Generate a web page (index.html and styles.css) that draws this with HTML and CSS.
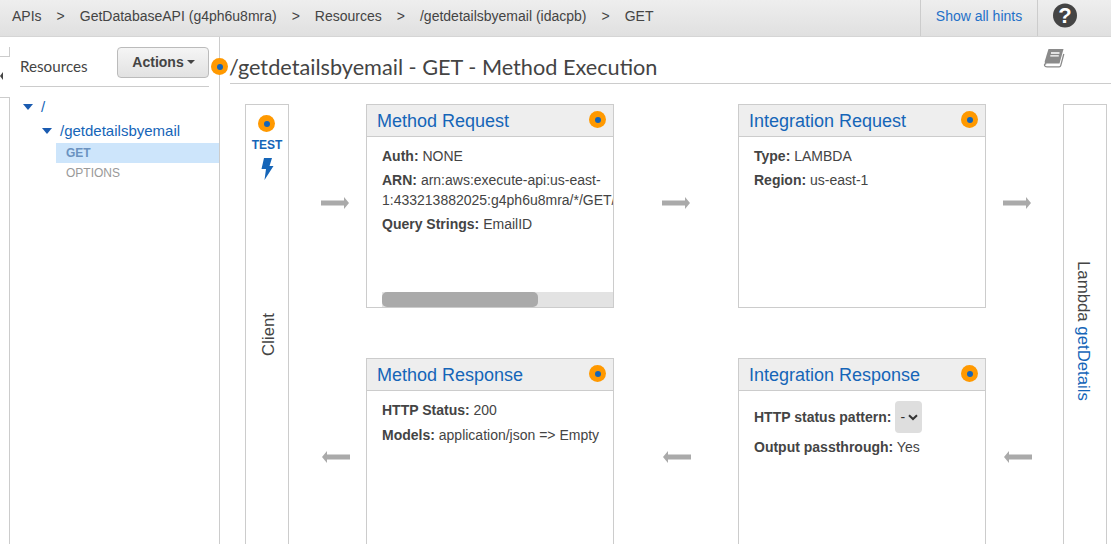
FILE: index.html
```html
<!DOCTYPE html>
<html lang="en">
<head>
<meta charset="utf-8">
<title>Method Execution</title>
<link rel="stylesheet" href="styles.css">
</head>
<body>
<header class="topbar">
  <nav class="crumbs">
    <span>APIs</span><span class="sep">&gt;</span>
    <span>GetDatabaseAPI (g4ph6u8mra)</span><span class="sep">&gt;</span>
    <span>Resources</span><span class="sep">&gt;</span>
    <span>/getdetailsbyemail (idacpb)</span><span class="sep">&gt;</span>
    <span>GET</span>
  </nav>
  <a class="hints">Show all hints</a>
  <div class="help"><svg width="26" height="26" viewBox="0 0 26 26"><circle cx="13" cy="12.5" r="12" fill="#444"/><text x="13" y="20" class="qmark" text-anchor="middle">?</text></svg></div>
</header>
<div class="layout">
  <aside class="rail">
    <div class="rail-tab"></div>
    <div class="rail-notch"></div>
    <div class="rail-box"></div>
  </aside>
  <section class="resources">
    <div class="res-head">
      <span class="res-title">Resources</span>
      <button class="actions">Actions<i class="caret"></i></button>
      <span class="dot dot-actions"><i></i></span>
    </div>
    <ul class="tree">
      <li class="tree-row r0"><i class="tri"></i><a>/</a></li>
      <li class="tree-row r1"><i class="tri"></i><a>/getdetailsbyemail</a></li>
      <li class="verb sel">GET</li>
      <li class="verb">OPTIONS</li>
    </ul>
  </section>
  <main class="content">
    <div class="title-row">
      <h1>/getdetailsbyemail - GET - Method Execution</h1>
      <svg class="book" width="22" height="20" viewBox="0 0 22 20"><path d="M5.5 1 H20.5 L16.5 15.5 H3.5 Q1.2 15.5 1.8 13 Z" fill="#8a8a8a"/><path d="M3.3 15.5 Q1 16 1.6 17.6 Q2 18.8 4 18.8 H16.2 Q17.4 18.8 17.8 17.4 L20.8 6" fill="none" stroke="#8a8a8a" stroke-width="1.3"/><path d="M8 5 H16.5 M7.3 7.8 H15.8" stroke="#fff" stroke-width="1.3"/></svg>
    </div>
    <div class="diagram">
      <div class="client">
        <span class="dot"><i></i></span>
        <a class="test">TEST</a>
        <svg class="bolt" width="13" height="22" viewBox="0 0 13 22"><path d="M3 0 H11 L8.5 8 H12.5 L3.5 22 L5 11 H0.5 Z" fill="#1565b8"/></svg>
        <span class="vtext client-label">Client</span>
      </div>
      <div class="flow-grid">
        <div class="arrow top a-left"><svg width="28" height="14" viewBox="0 0 28 14"><path d="M0 4.5 H23 V1 L28 7 L23 13 V9.5 H0 Z" fill="#aaa"/></svg></div>
        <article class="card">
          <header class="card-head"><a>Method Request</a><span class="dot"><i></i></span></header>
          <div class="card-body scrolls">
            <div class="inner">
              <p><b>Auth:</b> NONE</p>
              <p><b>ARN:</b> arn:aws:execute-api:us-east-<br>1:433213882025:g4ph6u8mra/*/GET/</p>
              <p><b>Query Strings:</b> EmailID</p>
            </div>
            <div class="track"><div class="thumb"></div></div>
          </div>
        </article>
        <div class="arrow top a-mid"><svg width="28" height="14" viewBox="0 0 28 14"><path d="M0 4.5 H23 V1 L28 7 L23 13 V9.5 H0 Z" fill="#aaa"/></svg></div>
        <article class="card">
          <header class="card-head"><a>Integration Request</a><span class="dot"><i></i></span></header>
          <div class="card-body">
            <p><b>Type:</b> LAMBDA</p>
            <p><b>Region:</b> us-east-1</p>
          </div>
        </article>
        <div class="arrow top a-right"><svg width="28" height="14" viewBox="0 0 28 14"><path d="M0 4.5 H23 V1 L28 7 L23 13 V9.5 H0 Z" fill="#aaa"/></svg></div>

        <div class="arrow bottom a-left b"><svg width="28" height="14" viewBox="0 0 28 14"><path d="M28 4.5 H5 V1 L0 7 L5 13 V9.5 H28 Z" fill="#aaa"/></svg></div>
        <article class="card tall">
          <header class="card-head"><a>Method Response</a><span class="dot"><i></i></span></header>
          <div class="card-body">
            <p><b>HTTP Status:</b> 200</p>
            <p class="wide"><b>Models:</b> application/json =&gt; Empty</p>
          </div>
        </article>
        <div class="arrow bottom a-mid b"><svg width="28" height="14" viewBox="0 0 28 14"><path d="M28 4.5 H5 V1 L0 7 L5 13 V9.5 H28 Z" fill="#aaa"/></svg></div>
        <article class="card tall">
          <header class="card-head"><a>Integration Response</a><span class="dot"><i></i></span></header>
          <div class="card-body tight">
            <p class="pattern"><b>HTTP status pattern:</b><span class="select">-<svg width="10" height="7" viewBox="0 0 10 7"><path d="M1 1.2 L5 5 L9 1.2" fill="none" stroke="#333" stroke-width="2"/></svg></span></p>
            <p><b>Output passthrough:</b> Yes</p>
          </div>
        </article>
        <div class="arrow bottom a-right b"><svg width="28" height="14" viewBox="0 0 28 14"><path d="M28 4.5 H5 V1 L0 7 L5 13 V9.5 H28 Z" fill="#aaa"/></svg></div>
      </div>
      <div class="lambda"><span class="vtext lambda-label">Lambda <a>getDetails</a></span></div>
    </div>
  </main>
</div>
</body>
</html>
```
FILE: styles.css
```css
* { box-sizing: border-box; }
html, body { margin: 0; height: 544px; overflow: hidden; background: #fff; }
body { font-family: "Liberation Sans", Arial, sans-serif; font-size: 14px; color: #444; }
a { color: #1565b8; }

.topbar { display: flex; height: 37px; background: linear-gradient(#eeeeee, #e0e0e0); border-bottom: 1px solid #d5d5d5; align-items: stretch; }
.crumbs { flex: 1; display: flex; align-items: center; padding: 0 0 4px 12px; color: #444; }
.sep { margin: 0 15px; }
.hints { width: 117px; border-left: 1px solid #ccc; color: #1f70c8; display: flex; align-items: center; justify-content: center; padding-bottom: 4px; }
.help { width: 74px; border-left: 1px solid #ccc; padding: 3px 0 0 14px; }
.qmark { font: bold 22px "Liberation Sans", sans-serif; fill: #fff; }

.layout { display: flex; height: 507px; }
.rail { width: 20px; flex: none; position: relative; }
.rail-tab { width: 10px; height: 10px; margin-top: 10px; border: 1px solid #ccc; border-width: 0 1px 1px 0; }
.rail-notch { width: 3px; height: 8px; margin-top: 15px; background: #444; clip-path: polygon(0 50%, 100% 0, 100% 100%); }
.rail-box { width: 10px; height: 447px; margin-top: 17px; border: 1px solid #ccc; border-width: 1px 1px 0 0; }

.resources { width: 200px; flex: none; border-right: 1px solid #ccc; }
.res-head { position: relative; display: flex; justify-content: space-between; height: 50px; margin-right: 10px; padding-top: 10px; border-bottom: 1px solid #ccc; }
.res-title { font: 400 15.2px/18px Lato, sans-serif; margin-top: 10px; color: #444; }
.actions { width: 92px; height: 31px; padding: 0 0 2px 1px; font: bold 14px "Liberation Sans", sans-serif; color: #444; background: linear-gradient(#f5f5f5, #e2e2e2); border: 1px solid #bbb; border-radius: 4px; }
.caret { display: inline-block; margin-left: 3px; vertical-align: 3px; border: 4px solid transparent; border-top-color: #444; border-bottom: 0; }
.dot-actions { position: absolute; right: -19px; top: 21px; }

.dot { display: inline-flex; align-items: center; justify-content: center; width: 17px; height: 17px; border-radius: 50%; background: #ff9900; }
.dot i { width: 6px; height: 6px; border-radius: 50%; background: #1565b8; }
.client .dot { margin-right: 1px; }

.tree { list-style: none; margin: 0; padding: 8px 0 0; }
.tree-row { height: 24px; display: flex; align-items: center; font-size: 15px; }
.tree-row a { line-height: 20px; }
.r0 { padding-left: 3px; }
.r1 { padding-left: 22px; }
.tri { width: 0; height: 0; margin-right: 8px; border: 5px solid transparent; border-width: 6px 5px 0; border-top-color: #1a5bb0; }
.verb { height: 20px; margin-left: 36px; padding-left: 10px; font-size: 12px; line-height: 20px; color: #999; }
.sel { background: #cde5fb; color: #6a92c0; font-weight: bold; }

.content { flex: 1; min-width: 0; padding-left: 10px; }
.title-row { display: flex; justify-content: space-between; height: 47px; border-bottom: 1px solid #ccc; }
h1 { margin: 16px 0 0 -1px; font: 400 21.7px/28px Lato, sans-serif; color: #444; white-space: nowrap; }
.book { margin: 11px 46px 0 0; }

.diagram { display: flex; height: 460px; margin-top: 20px; padding: 0 4px 0 15px; }
.client { width: 44px; flex: none; border: 1px solid #ccc; border-bottom: 0; display: flex; flex-direction: column; align-items: center; padding-top: 10px; }
.test { font-size: 12px; font-weight: bold; line-height: 16px; margin-top: 5px; }
.bolt { margin-top: 5px; }
.vtext { writing-mode: vertical-rl; font-size: 16.8px; white-space: nowrap; color: #444; }
.client-label { transform: rotate(180deg); margin: 133px 0 0 3px; }

.flow-grid { flex: 1; display: grid; grid-template-columns: 77px 248px 124px 248px 77px; grid-template-rows: 204px 186px; row-gap: 50px; }
.arrow { display: flex; justify-content: flex-start; }
.arrow.top { align-items: center; padding-bottom: 6px; }
.arrow.bottom { align-items: flex-start; padding-top: 92px; }
.a-left { padding-left: 32px; }
.a-mid { padding-left: 48px; }
.a-right { padding-left: 17px; }
.arrow.b svg { margin-left: 1px; }
.card { border: 1px solid #ccc; overflow: hidden; background: #fff; display: flex; flex-direction: column; }
.tall { border-bottom: 0; }
.card-head { flex: none; height: 32px; background: #eeeeee; border-bottom: 1px solid #ccc; display: flex; justify-content: space-between; padding: 5px 7px 0 10px; }
.card-head a { font-size: 18px; line-height: 22px; }
.card-head .dot { margin-top: 1px; }
.card-body { flex: 1; padding: 9px 0 0 15px; min-height: 0; position: relative; }
.card-body p { margin: 0 0 4px; line-height: 20px; white-space: nowrap; }
.inner { overflow: hidden; }
.track { position: absolute; left: 15px; right: 0; bottom: 0; height: 15px; background: #e3e3e3; }
.thumb { width: 156px; height: 15px; background: #aaa; border-radius: 5px; }
.card-body p.wide { margin-top: 5px; }
.tight { padding-top: 10px; }
.card-body p.pattern { display: flex; align-items: center; height: 32px; line-height: 32px; }
.select { display: inline-flex; align-items: center; gap: 3px; width: 27px; height: 32px; margin-left: 4px; padding-left: 5px; background: #dedede; border-radius: 4px; color: #333; }

.lambda { width: 44px; flex: none; border: 1px solid #ccc; border-bottom: 0; display: flex; justify-content: center; padding-right: 4px; }
.lambda-label { margin-top: 156px; }
```
